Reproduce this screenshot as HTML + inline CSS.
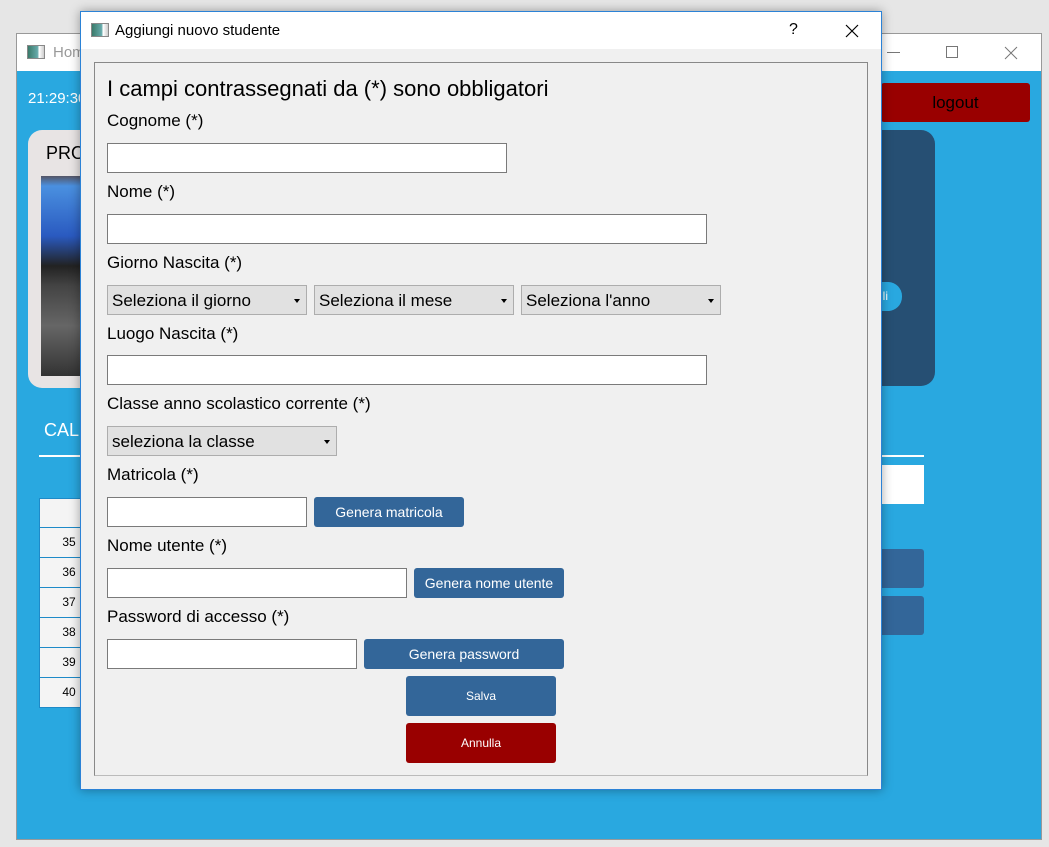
<!DOCTYPE html>
<html><head><meta charset="utf-8"><style>
*{box-sizing:border-box;margin:0;padding:0}
body{width:1049px;height:847px;background:#e6e6e6;position:relative;overflow:hidden;font-family:"Liberation Sans",sans-serif}
.a{position:absolute}
.main{left:16px;top:33px;width:1026px;height:807px;background:#29a8e0;border:1px solid #999}
.mt{left:0;top:0;width:1024px;height:37px;background:#fff}
.dlg{left:80px;top:11px;width:802px;height:779px;background:#f0f0f0;border:1px solid #2b82d6;box-shadow:0 0 10px rgba(0,0,0,.35)}
.lbl{font-size:17px;color:#000}
.in{background:#fff;border:1px solid #7a7a7a;height:30px}
.cb{background:#e1e1e1;border:1px solid #adadad;height:30px;font-size:17px;padding:5px 0 0 4px}
.cb:after{content:"";position:absolute;right:6px;top:13px;border:3px solid transparent;border-top:4px solid #000}
.btn{background:#336699;color:#fff;border-radius:3px;font-size:14px;text-align:center;height:30px;line-height:30px}
.row{height:30px;background:#f4f4f4;border:1px solid #1e8ac8;border-top:0;text-align:center;line-height:29px}
</style></head><body>
<div class="a main">
 <div class="a mt">
  <div class="a" style="left:10px;top:11px;width:18px;height:14px;border:1px solid #888;background:linear-gradient(90deg,#3a7a6a,#6aa 60%,#fff 70%,#ccc)"></div>
  <div class="a" style="left:36px;top:10px;font-size:15px;color:#999">Home</div>
  <div class="a" style="left:870px;top:18px;width:13px;height:1px;background:#777"></div>
  <div class="a" style="left:929px;top:12px;width:12px;height:12px;border:1px solid #777"></div>
  <svg class="a" style="left:987px;top:12px" width="14" height="14"><path d="M1 1L13 13M13 1L1 13" stroke="#777" stroke-width="1"/></svg>
 </div>
 <div class="a" style="left:11px;top:56px;color:#fff;font-size:15px">21:29:30</div>
 <div class="a" style="left:11px;top:96px;width:200px;height:258px;background:#e8e4e4;border-radius:14px"></div>
 <div class="a" style="left:29px;top:109px;font-size:18px">PROFILO</div>
 <div class="a" style="left:24px;top:142px;width:60px;height:200px;background:linear-gradient(180deg,#556 0,#4a90e0 5%,#2a5ac0 30%,#222 45%,#444 55%,#666 75%,#333)"></div>
 <div class="a" style="left:864px;top:49px;width:149px;height:39px;background:#990000;border-radius:3px;text-align:center;line-height:39px;font-size:17px">logout</div>
 <div class="a" style="left:800px;top:96px;width:118px;height:256px;background:#264f73;border-radius:14px"></div>
 <div class="a" style="left:850px;top:134px;color:#fff;font-size:14px">ca</div>
 <div class="a" style="left:840px;top:248px;width:45px;height:29px;background:#29a8e0;border-radius:14px;color:#fff;font-size:12px;line-height:29px;text-align:right;padding-right:14px">li</div>
 <div class="a" style="left:27px;top:386px;color:#fff;font-size:18px">CALENDARIO</div>
 <div class="a" style="left:22px;top:421px;width:885px;height:2px;background:#fff"></div>
 <div class="a" style="left:850px;top:431px;width:57px;height:39px;background:#fff"></div>
 <div class="a" style="left:850px;top:515px;width:57px;height:39px;background:#336699;border-radius:3px"></div>
 <div class="a" style="left:850px;top:562px;width:57px;height:39px;background:#336699;border-radius:3px"></div>
 <div class="a" style="left:22px;top:464px;width:60px;font-size:12px;color:#000">
  <div style="height:30px;background:#f4f4f4;border:1px solid #1e8ac8"></div>
  <div class="row">35</div><div class="row">36</div><div class="row">37</div><div class="row">38</div><div class="row">39</div><div class="row">40</div>
 </div>
</div>
<div class="a dlg">
 <div class="a" style="left:0;top:0;width:800px;height:37px;background:#fff"></div>
 <div class="a" style="left:10px;top:11px;width:18px;height:14px;border:1px solid #888;background:linear-gradient(90deg,#3a7a6a,#6aa 60%,#fff 70%,#ccc)"></div>
 <div class="a" style="left:34px;top:10px;font-size:15px">Aggiungi nuovo studente</div>
 <div class="a" style="left:708px;top:9px;font-size:16px">?</div>
 <svg class="a" style="left:764px;top:12px" width="14" height="14"><path d="M1 1L13 13M13 1L1 13" stroke="#000" stroke-width="1.2"/></svg>
 <div class="a" style="left:13px;top:50px;width:774px;height:714px;border:1px solid #888;border-bottom-color:#bbb"></div>
</div>
<div class="a" style="left:107px;top:76px;font-size:22px">I campi contrassegnati da (*) sono obbligatori</div>
<div class="a lbl" style="left:107px;top:111px">Cognome (*)</div>
<div class="a in" style="left:107px;top:143px;width:400px"></div>
<div class="a lbl" style="left:107px;top:182px">Nome (*)</div>
<div class="a in" style="left:107px;top:214px;width:600px"></div>
<div class="a lbl" style="left:107px;top:253px">Giorno Nascita (*)</div>
<div class="a cb" style="left:107px;top:285px;width:200px">Seleziona il giorno</div>
<div class="a cb" style="left:314px;top:285px;width:200px">Seleziona il mese</div>
<div class="a cb" style="left:521px;top:285px;width:200px">Seleziona l'anno</div>
<div class="a lbl" style="left:107px;top:324px">Luogo Nascita (*)</div>
<div class="a in" style="left:107px;top:355px;width:600px"></div>
<div class="a lbl" style="left:107px;top:394px">Classe anno scolastico corrente (*)</div>
<div class="a cb" style="left:107px;top:426px;width:230px">seleziona la classe</div>
<div class="a lbl" style="left:107px;top:465px">Matricola (*)</div>
<div class="a in" style="left:107px;top:497px;width:200px"></div>
<div class="a btn" style="left:314px;top:497px;width:150px">Genera matricola</div>
<div class="a lbl" style="left:107px;top:536px">Nome utente (*)</div>
<div class="a in" style="left:107px;top:568px;width:300px"></div>
<div class="a btn" style="left:414px;top:568px;width:150px">Genera nome utente</div>
<div class="a lbl" style="left:107px;top:607px">Password di accesso (*)</div>
<div class="a in" style="left:107px;top:639px;width:250px"></div>
<div class="a btn" style="left:364px;top:639px;width:200px">Genera password</div>
<div class="a btn" style="left:406px;top:676px;width:150px;height:40px;line-height:40px;font-size:12px">Salva</div>
<div class="a btn" style="left:406px;top:723px;width:150px;height:40px;line-height:40px;font-size:12px;background:#990000">Annulla</div>
</body></html>
